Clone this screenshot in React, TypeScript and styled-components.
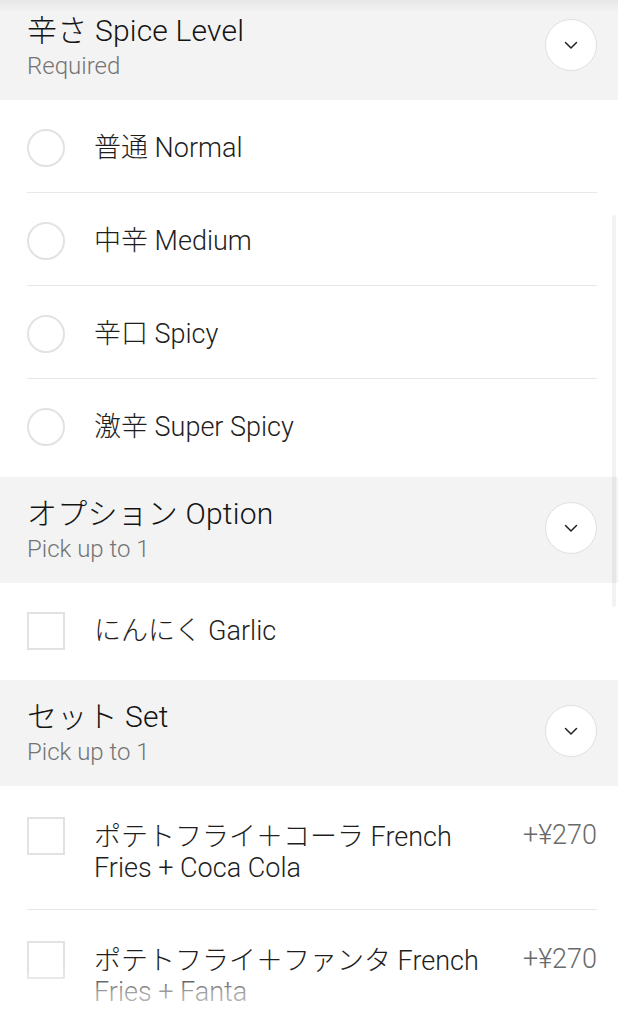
import React from "react";
import styled, { createGlobalStyle } from "styled-components";

const GlobalStyle = createGlobalStyle`
  html, body {
    margin: 0;
    padding: 0;
    background: #ffffff;
  }
  body {
    font-family: Roboto, "Noto Sans CJK JP", sans-serif;
    color: #1e1e1e;
    overflow: hidden;
  }
`;

const Page = styled.div`
  width: 618px;
  height: 1024px;
  overflow: hidden;
  position: relative;
  background: #ffffff;
`;

const Scroller = styled.div`
  margin-top: -6px;
`;

const GroupHeader = styled.div`
  background: #f3f3f3;
  height: 106px;
  box-sizing: border-box;
  padding: 18px 21px 0 27px;
  display: flex;
  align-items: flex-start;
  justify-content: space-between;
`;

const HeaderText = styled.div`
  display: flex;
  flex-direction: column;
`;

const GroupTitle = styled.div`
  font-size: 30px;
  line-height: 37px;
  color: #141414;
  font-weight: 300;
  letter-spacing: 0.2px;
`;

const GroupHint = styled.div`
  font-size: 24px;
  line-height: 28px;
  margin-top: 3px;
  color: #747474;
  font-weight: 300;
`;

const ChevronButton = styled.div`
  width: 52px;
  height: 52px;
  border-radius: 50%;
  background: #ffffff;
  border: 1.5px solid #e0e0e0;
  box-sizing: border-box;
  display: flex;
  align-items: center;
  justify-content: center;
  margin-top: 7px;
`;

const List = styled.div<{ $tail: number }>`
  padding: 0 21px ${({ $tail }) => $tail}px 27px;
`;

const Row = styled.div<{ $last?: boolean; $top: number }>`
  display: flex;
  align-items: flex-start;
  padding: ${({ $top }) => $top}px 0 25px;
  border-bottom: ${({ $last }) => ($last ? "none" : "1px solid #e8e8e8")};
`;

const Radio = styled.div`
  width: 38px;
  height: 38px;
  border-radius: 50%;
  border: 2px solid #e2e2e2;
  box-sizing: border-box;
  flex-shrink: 0;
`;

const Check = styled.div`
  width: 38px;
  height: 38px;
  border: 2px solid #e2e2e2;
  box-sizing: border-box;
  flex-shrink: 0;
`;

const Label = styled.div<{ $multi?: boolean }>`
  flex: 1;
  margin-left: 29px;
  font-size: 27px;
  font-weight: 300;
  line-height: ${({ $multi }) => ($multi ? "31px" : "38px")};
  margin-top: ${({ $multi }) => ($multi ? "5px" : "0")};
  color: #1e1e1e;
  padding-right: 20px;
`;

const Price = styled.div`
  font-size: 27px;
  font-weight: 300;
  line-height: 31px;
  margin-top: 3px;
  color: #6a6a6a;
  white-space: nowrap;
`;

const TopShade = styled.div`
  position: absolute;
  top: 0;
  left: 0;
  right: 0;
  height: 12px;
  background: linear-gradient(rgba(0, 0, 0, 0.05), rgba(0, 0, 0, 0));
  pointer-events: none;
`;

const BottomFade = styled.div`
  position: absolute;
  left: 0;
  right: 0;
  bottom: 0;
  height: 56px;
  background: linear-gradient(
    rgba(255, 255, 255, 0),
    rgba(255, 255, 255, 0.6) 45%,
    rgba(255, 255, 255, 0.8)
  );
  pointer-events: none;
`;

const ScrollTrack = styled.div`
  position: absolute;
  right: 2px;
  top: 215px;
  width: 4px;
  height: 392px;
  background: rgba(0, 0, 0, 0.05);
  border-radius: 2px;
  pointer-events: none;
`;

const Chevron = () => (
  <svg width="14" height="9" viewBox="0 0 14 9" fill="none">
    <path d="M1.5 1.5 L7 7 L12.5 1.5" stroke="#222" strokeWidth="1.5" strokeLinecap="round" strokeLinejoin="round" />
  </svg>
);

type Group = {
  title: string;
  hint: string;
  kind: "radio" | "check";
  tail: number;
  items: { label: string; price?: string }[];
};

const groups: Group[] = [
  {
    title: "辛さ Spice Level",
    hint: "Required",
    kind: "radio",
    tail: 6,
    items: [
      { label: "普通 Normal" },
      { label: "中辛 Medium" },
      { label: "辛口 Spicy" },
      { label: "激辛 Super Spicy" },
    ],
  },
  {
    title: "オプション Option",
    hint: "Pick up to 1",
    kind: "check",
    tail: 5,
    items: [{ label: "にんにく Garlic" }],
  },
  {
    title: "セット Set",
    hint: "Pick up to 1",
    kind: "check",
    tail: 20,
    items: [
      { label: "ポテトフライ＋コーラ French Fries + Coca Cola", price: "+¥270" },
      { label: "ポテトフライ＋ファンタ French Fries + Fanta", price: "+¥270" },
    ],
  },
];

export default function App() {
  return (
    <>
      <GlobalStyle />
      <Page>
        <Scroller>
          {groups.map((g) => (
            <section key={g.title}>
              <GroupHeader>
                <HeaderText>
                  <GroupTitle>{g.title}</GroupTitle>
                  <GroupHint>{g.hint}</GroupHint>
                </HeaderText>
                <ChevronButton>
                  <Chevron />
                </ChevronButton>
              </GroupHeader>
              <List $tail={g.tail}>
                {g.items.map((it, i) => (
                  <Row key={it.label} $top={it.price ? 31 : 29} $last={i === g.items.length - 1}>
                    {g.kind === "radio" ? <Radio /> : <Check />}
                    <Label $multi={!!it.price}>{it.label}</Label>
                    {it.price && <Price>{it.price}</Price>}
                  </Row>
                ))}
              </List>
            </section>
          ))}
        </Scroller>
        <TopShade />
        <ScrollTrack />
        <BottomFade />
      </Page>
    </>
  );
}
